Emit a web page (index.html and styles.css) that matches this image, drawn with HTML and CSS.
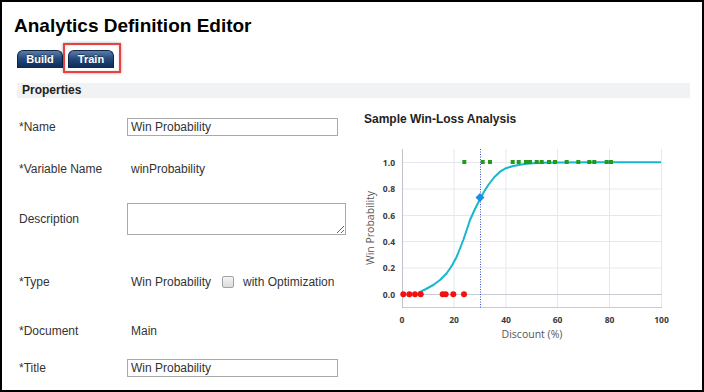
FILE: index.html
```html
<!DOCTYPE html>
<html lang="en">
<head>
    <meta charset="UTF-8">
    <title>Analytics Definition Editor</title>
    <link rel="stylesheet" href="styles.css">
</head>
<body>
<div class="frame">

    <h1 class="page-title">Analytics Definition Editor</h1>

    <!-- Tabs -->
    <div class="tabs">
        <div class="tab">Build</div>
        <div class="tab tab-marked">Train</div>
    </div>

    <div class="section-bar">Properties</div>

    <div class="content">
        <!-- Property form -->
        <div class="form">
            <div class="row row-name">
                <div class="label">*Name</div>
                <input class="text-input" type="text" value="Win Probability">
            </div>
            <div class="row row-var">
                <div class="label">*Variable Name</div>
                <div class="value">winProbability</div>
            </div>
            <div class="row row-desc">
                <div class="label">Description</div>
                <textarea class="text-area"></textarea>
            </div>
            <div class="row row-type">
                <div class="label">*Type</div>
                <div class="value">Win Probability</div>
                <span class="check"></span>
                <span class="check-label">with Optimization</span>
            </div>
            <div class="row row-doc">
                <div class="label">*Document</div>
                <div class="value">Main</div>
            </div>
            <div class="row row-title">
                <div class="label">*Title</div>
                <input class="text-input" type="text" value="Win Probability">
            </div>
        </div>

        <!-- Sample chart -->
        <div class="chart">
            <div class="chart-title">Sample Win-Loss Analysis</div>
            <svg class="chart-svg" width="320" height="210" viewBox="0 0 320 210">
                <!-- grid -->
                <g stroke="#e4e8ee" stroke-width="1">
                    <line x1="94" y1="9" x2="94" y2="168"/>
                    <line x1="146" y1="9" x2="146" y2="168"/>
                    <line x1="197.5" y1="9" x2="197.5" y2="168"/>
                    <line x1="249.5" y1="9" x2="249.5" y2="168"/>
                    <line x1="301.5" y1="9" x2="301.5" y2="168"/>
                    <line x1="42" y1="22.5" x2="302" y2="22.5"/>
                    <line x1="42" y1="49" x2="302" y2="49"/>
                    <line x1="42" y1="75.5" x2="302" y2="75.5"/>
                    <line x1="42" y1="101.5" x2="302" y2="101.5"/>
                    <line x1="42" y1="128" x2="302" y2="128"/>
                </g>
                <line x1="42" y1="154.5" x2="302" y2="154.5" stroke="#c8ccd2"/>
                <line x1="42" y1="167.5" x2="302" y2="167.5" stroke="#c8ccd2"/>
                <line x1="42.5" y1="9" x2="42.5" y2="168" stroke="#bfc3c9"/>

                <!-- tick labels -->
                <g class="tick" text-anchor="end">
                    <text x="35" y="25.5">1.0</text>
                    <text x="35" y="52">0.8</text>
                    <text x="35" y="78.5">0.6</text>
                    <text x="35" y="104.5">0.4</text>
                    <text x="35" y="131">0.2</text>
                    <text x="35" y="157.5">0.0</text>
                </g>
                <g class="tick" text-anchor="middle">
                    <text x="42" y="182.5">0</text>
                    <text x="94" y="182.5">20</text>
                    <text x="146" y="182.5">40</text>
                    <text x="197.5" y="182.5">60</text>
                    <text x="249.5" y="182.5">80</text>
                    <text x="301.5" y="182.5">100</text>
                </g>
                <text class="axis-title" x="172" y="198" text-anchor="middle">Discount (%)</text>
                <text class="axis-title" x="0" y="0" text-anchor="middle" transform="translate(14 88) rotate(-90)">Win Probability</text>

                <!-- curve -->
                <polyline fill="none" stroke="#17b6cf" stroke-width="2" stroke-linejoin="round"
                    points="58.3,152.7 65,149.5 73.3,145 80,140 86.7,133.3 92,125.5 96.7,116.7 100,108.5 103.3,100 106.7,90 110,80 115,69 120,59.3 124,51.8 128.3,45 134,37.5 140,31.7 146,28.2 153.3,26 160,24.7 166.7,23.8 180,22.8 200,22.4 230,22.2 301,22.2"/>

                <!-- current discount -->
                <line x1="120.5" y1="9" x2="120.5" y2="168" stroke="#3a4fc8" stroke-width="1" stroke-dasharray="1 1.5"/>

                <!-- wins -->
                <g fill="#249a1c">
                    <rect x="102.3" y="20" width="4" height="4"/>
                    <rect x="120.7" y="20" width="4" height="4"/>
                    <rect x="128" y="20" width="4" height="4"/>
                    <rect x="150.7" y="20" width="4" height="4"/>
                    <rect x="156.7" y="20" width="4" height="4"/>
                    <rect x="164" y="20" width="4" height="4"/>
                    <rect x="168" y="20" width="4" height="4"/>
                    <rect x="174.7" y="20" width="4" height="4"/>
                    <rect x="179.7" y="20" width="4" height="4"/>
                    <rect x="187" y="20" width="4" height="4"/>
                    <rect x="193" y="20" width="4" height="4"/>
                    <rect x="204.7" y="20" width="4" height="4"/>
                    <rect x="216.3" y="20" width="4" height="4"/>
                    <rect x="227.3" y="20" width="4" height="4"/>
                    <rect x="232.3" y="20" width="4" height="4"/>
                    <rect x="244.7" y="20" width="4" height="4"/>
                    <rect x="249" y="20" width="4" height="4"/>
                </g>

                <!-- losses -->
                <g fill="#f50f0f">
                    <circle cx="43.3" cy="154.3" r="3"/>
                    <circle cx="49.3" cy="154.3" r="3"/>
                    <circle cx="55" cy="154.3" r="3"/>
                    <circle cx="60.7" cy="154.3" r="3"/>
                    <circle cx="82.7" cy="154.3" r="3"/>
                    <circle cx="85.7" cy="154.3" r="3"/>
                    <circle cx="93.3" cy="154.3" r="3"/>
                    <circle cx="104" cy="154.3" r="3"/>
                </g>

                <polygon points="120,53 124.5,57.5 120,62 115.5,57.5" fill="#1a8fe3"/>
            </svg>
        </div>
    </div>

</div>
</body>
</html>
```

FILE: styles.css
```css
* {
    margin: 0;
    padding: 0;
    box-sizing: border-box;
}

body {
    font-family: "Liberation Sans", Arial, sans-serif;
    background: #ffffff;
    color: #333;
}

.frame {
    width: 704px;
    height: 392px;
    border: 2px solid #000;
    overflow: hidden;
}

.page-title {
    margin: 13px 0 0 12px;
    font-size: 19px;
    line-height: 22px;
    font-weight: bold;
    color: #000;
}

/* Tabs */
.tabs {
    display: flex;
    gap: 5px;
    margin: 13px 0 0 15px;
}

.tab {
    width: 46px;
    height: 18px;
    border: 1px solid #0b2448;
    border-bottom: none;
    border-radius: 6px 6px 0 0;
    background: linear-gradient(#5a7ca8, #244a7c 45%, #0c2a55);
    color: #fff;
    font-size: 11px;
    font-weight: bold;
    line-height: 17px;
    text-align: center;
    text-shadow: 0 -1px 0 rgba(0, 0, 0, 0.4);
    position: relative;
}

/* red highlight drawn over the Train tab */
.tab-marked::after {
    content: "";
    position: absolute;
    top: -8px;
    left: -6px;
    right: -8px;
    bottom: -5px;
    border: 2px solid #e8413f;
    box-shadow: 0 0 3px rgba(0, 0, 0, 0.35), inset 0 0 2px rgba(0, 0, 0, 0.2);
}

.section-bar {
    margin: 15px 12px 0 15px;
    height: 15px;
    padding-left: 5px;
    background: #f1f2f4;
    font-size: 12px;
    font-weight: bold;
    line-height: 15px;
    color: #222;
}

.content {
    display: flex;
    margin-top: 12px;
}

/* Form */
.form {
    width: 358px;
    padding-left: 17px;
    font-size: 12px;
}

.row {
    display: flex;
    align-items: center;
}

.row-name { height: 34px; }
.row-var { height: 50px; }
.row-desc { height: 50px; }
.row-type { height: 76px; }
.row-doc { height: 22px; }
.row-title { height: 52px; }

.label {
    width: 108px;
    color: #333;
}

.value {
    padding-left: 4px;
    color: #333;
}

.text-input {
    width: 211px;
    height: 18px;
    border: 1px solid #a9a9a9;
    padding-left: 3px;
    font-family: "Liberation Sans", Arial, sans-serif;
    font-size: 12px;
    color: #333;
}

.text-area {
    width: 219px;
    height: 32px;
    border: 1px solid #a9a9a9;
    font-family: "Liberation Sans", Arial, sans-serif;
    font-size: 12px;
}

.check {
    width: 12px;
    height: 12px;
    margin-left: 11px;
    border: 1px solid #a3a3a3;
    border-radius: 2px;
    background: linear-gradient(#f4f4f4, #dcdcdc);
}

.check-label {
    margin-left: 9px;
}

/* Chart */
.chart {
    flex: 1;
}

.chart-title {
    padding-left: 4px;
    font-size: 12px;
    font-weight: bold;
    line-height: 18px;
    color: #222;
}

.chart-svg {
    display: block;
    margin-top: 12px;
}

.tick {
    font-family: "Open Sans", sans-serif;
    font-size: 8.5px;
    font-weight: bold;
    fill: #3a3a3a;
}

.axis-title {
    font-family: "Open Sans", sans-serif;
    font-size: 10.5px;
    fill: #555;
}
```
